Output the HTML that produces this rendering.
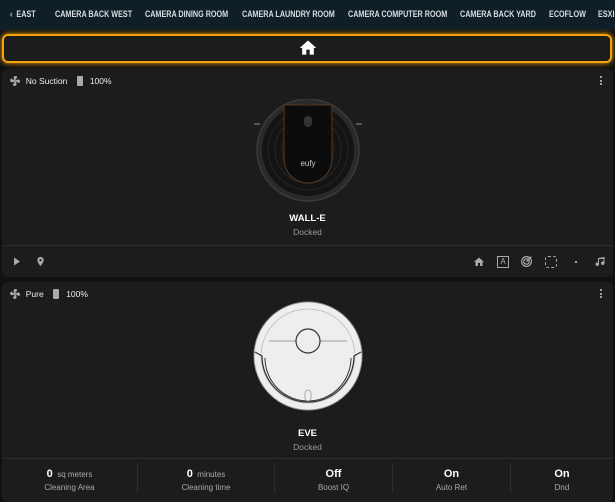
<!DOCTYPE html>
<html><head><style>
*{box-sizing:border-box;margin:0;padding:0}
body{width:615px;height:500px;background:#111;font-family:"Liberation Sans",sans-serif;overflow:hidden;position:relative;color:#e1e1e1}
.top{position:absolute;left:0;top:0;width:615px;height:30px;background:#101e28;}
.top span{position:absolute;top:9px;font-size:9.5px;font-weight:bold;color:#d8dde0;white-space:nowrap;transform:scaleX(0.76);transform-origin:left}
.home{position:absolute;left:2px;top:34px;width:610px;height:29px;background:#1c1c1c;border:2px solid #f5a30a;border-radius:6px;box-shadow:0 0 6px #f5a30a}
.card{position:absolute;left:2px;width:611px;background:#1c1c1c;border-radius:6px}
.hdr{position:absolute;left:7px;top:6px;font-size:8.5px;color:#eee;display:flex;align-items:center}
.name{position:absolute;width:100%;text-align:center;font-weight:bold;font-size:9.5px;color:#fff}
.st{position:absolute;width:100%;text-align:center;font-size:8.5px;color:#9a9a9a}
.dots{position:absolute;right:10px;width:3px}
.dots i{display:block;width:2px;height:2px;background:#ccc;margin-bottom:1.5px;border-radius:1px}
.stats{position:absolute;left:0;top:176px;width:100%;height:38px;border-top:1px solid #2e2e2e}
.stats div{position:absolute;top:4px;height:30px;text-align:center;border-left:1px solid #2e2e2e;padding-top:1px}
.stats div:first-child{border-left:none}
.stats b{font-size:11px;color:#fff}
.stats small{font-size:8px;color:#aaa}
.stats p{font-size:8px;color:#aaa;margin-top:1px}
</style></head><body>
<div class="top">
<span style="left:10px">&#8249;&nbsp; EAST</span>
<span style="left:55px">CAMERA BACK WEST</span>
<span style="left:145px">CAMERA DINING ROOM</span>
<span style="left:242px">CAMERA LAUNDRY ROOM</span>
<span style="left:348px">CAMERA COMPUTER ROOM</span>
<span style="left:460px">CAMERA BACK YARD</span>
<span style="left:549px">ECOFLOW</span>
<span style="left:598px">ESXI</span>
</div>
<div class="home"><svg style="position:absolute;left:294px;top:2px" width="20" height="20" viewBox="0 0 24 24"><path d="M10 20v-6h4v6h5v-8h3L12 3 2 12h3v8z" fill="#fff"/></svg></div>

<div class="card" style="top:69px;height:208px">
<div class="hdr"><svg width="12" height="12" viewBox="0 0 24 24"><path fill="#aaa" d="M12 11a1 1 0 100 2 1 1 0 000-2m.5-9c4.5 0 4.6 3.6 2.2 4.8-1 .5-1.4 1.4-1.6 2.3.5.2.9.5 1.2.9 3.7-2 7.7-1.2 7.7 2.3 0 4.5-3.6 4.6-4.8 2.2-.5-1-1.4-1.4-2.3-1.6-.2.5-.5.9-.9 1.2 2 3.7 1.2 7.7-2.3 7.7-4.5 0-4.6-3.6-2.2-4.8 1-.5 1.4-1.4 1.5-2.3-.5-.2-.9-.5-1.2-.9C6.3 15.4 2.3 14.6 2.3 11c0-4.5 3.6-4.6 4.8-2.2.5 1 1.4 1.4 2.3 1.5.2-.5.5-.9.9-1.2C8.3 5.4 9 2 12.5 2z"/></svg>&nbsp;&nbsp;No Suction&nbsp;&nbsp;&nbsp;&nbsp;<span style="display:inline-block;width:6px;height:10px;background:#aaa;border-radius:1px"></span>&nbsp;&nbsp;&nbsp;100%</div>
<div class="dots" style="top:7px"><i></i><i></i><i></i></div>
<svg style="position:absolute;left:248px;top:30px" width="116" height="104" viewBox="0 0 116 104">
<rect x="4" y="24" width="6" height="2" fill="#555"/><rect x="106" y="24" width="6" height="2" fill="#555"/>
<circle cx="58" cy="51" r="51" fill="#2a2a2a" stroke="#3a3a3a" stroke-width="1.5"/>
<circle cx="58" cy="51" r="46" fill="#141414"/>
<circle cx="58" cy="51" r="40" fill="none" stroke="#262626" stroke-width="1"/>
<circle cx="58" cy="51" r="33" fill="none" stroke="#262626" stroke-width="1"/>
<circle cx="58" cy="51" r="26" fill="none" stroke="#262626" stroke-width="1"/>
<path d="M34 6 L82 6 L82 60 A24 24 0 0 1 34 60 Z" fill="#0c0c0c" stroke="#5a3a22" stroke-width="1"/>
<rect x="54" y="17" width="8" height="11" rx="4" fill="#333"/>
<text x="58" y="67" text-anchor="middle" font-size="8" fill="#ccc" font-family="Liberation Sans">eufy</text>
</svg>
<div class="name" style="top:144px">WALL-E</div>
<div class="st" style="top:158px">Docked</div>
<div style="position:absolute;left:0;top:176px;width:100%;border-top:1px solid #2e2e2e"></div>
<svg style="position:absolute;left:11px;top:188px" width="8" height="9" viewBox="0 0 8 9"><path d="M1 0.5 L7 4.5 L1 8.5Z" fill="#aaa"/></svg>
<svg style="position:absolute;left:33px;top:186px" width="11" height="13" viewBox="0 0 24 24"><path fill="#aaa" d="M12 2a7 7 0 00-7 7c0 5 7 13 7 13s7-8 7-13a7 7 0 00-7-7m0 9.5A2.5 2.5 0 1112 6.5a2.5 2.5 0 010 5z"/></svg>
<svg style="position:absolute;left:471px;top:187px" width="12" height="12" viewBox="0 0 24 24"><path d="M10 20v-6h4v6h5v-8h3L12 3 2 12h3v8z" fill="#aaa"/></svg>
<div style="position:absolute;left:495px;top:187px;width:12px;height:12px;border:1.5px solid #aaa;font-size:8px;color:#aaa;text-align:center;line-height:9px">A</div>
<svg style="position:absolute;left:518px;top:186px" width="13" height="13" viewBox="0 0 24 24"><g fill="none" stroke="#aaa" stroke-width="2.2"><circle cx="12" cy="12" r="9"/><circle cx="12" cy="12" r="5"/></g><path d="M12 12 L21 3" stroke="#aaa" stroke-width="2.5"/></svg>
<div style="position:absolute;left:543px;top:187px;width:12px;height:12px;border:1.5px dashed #aaa;border-radius:3px"></div>
<div style="position:absolute;left:573px;top:192px;width:2px;height:2px;background:#aaa"></div>
<svg style="position:absolute;left:592px;top:186px" width="12" height="13" viewBox="0 0 24 24"><path fill="#aaa" d="M21 3v12.5a3.5 3.5 0 11-2-3.15V7H10v10.5a3.5 3.5 0 11-2-3.15V5z"/></svg>
</div>

<div class="card" style="top:282px;height:220px">
<div class="hdr"><svg width="12" height="12" viewBox="0 0 24 24"><path fill="#aaa" d="M12 11a1 1 0 100 2 1 1 0 000-2m.5-9c4.5 0 4.6 3.6 2.2 4.8-1 .5-1.4 1.4-1.6 2.3.5.2.9.5 1.2.9 3.7-2 7.7-1.2 7.7 2.3 0 4.5-3.6 4.6-4.8 2.2-.5-1-1.4-1.4-2.3-1.6-.2.5-.5.9-.9 1.2 2 3.7 1.2 7.7-2.3 7.7-4.5 0-4.6-3.6-2.2-4.8 1-.5 1.4-1.4 1.5-2.3-.5-.2-.9-.5-1.2-.9C6.3 15.4 2.3 14.6 2.3 11c0-4.5 3.6-4.6 4.8-2.2.5 1 1.4 1.4 2.3 1.5.2-.5.5-.9.9-1.2C8.3 5.4 9 2 12.5 2z"/></svg>&nbsp;&nbsp;Pure&nbsp;&nbsp;&nbsp;&nbsp;<span style="display:inline-block;width:6px;height:10px;background:#aaa;border-radius:1px"></span>&nbsp;&nbsp;&nbsp;100%</div>
<div class="dots" style="top:7px"><i></i><i></i><i></i></div>
<svg style="position:absolute;left:250px;top:18px" width="112" height="112" viewBox="0 0 112 112">
<circle cx="56" cy="56" r="54" fill="#eee" stroke="#999" stroke-width="1"/>
<circle cx="56" cy="56" r="47" fill="none" stroke="#bbb" stroke-width="0.8"/>
<path d="M17 41 H95" stroke="#aaa" stroke-width="1.2"/>
<circle cx="56" cy="41" r="12" fill="#eee" stroke="#333" stroke-width="1.2"/>
<path d="M3 52 L10 56 A46 46 0 0 0 102 56 L109 52" fill="none" stroke="#333" stroke-width="1.2"/>
<path d="M13 58 A43 43 0 0 0 99 58" fill="none" stroke="#333" stroke-width="1"/>
<rect x="53" y="90" width="6" height="11" rx="3" fill="none" stroke="#999" stroke-width="0.8"/>
</svg>
<div class="name" style="top:146px">EVE</div>
<div class="st" style="top:160px">Docked</div>
<div class="stats">
<div style="left:0;width:135px"><b>0</b> <small>sq meters</small><p>Cleaning Area</p></div>
<div style="left:135px;width:137px"><b>0</b> <small>minutes</small><p>Cleaning time</p></div>
<div style="left:272px;width:118px"><b>Off</b><p>Boost IQ</p></div>
<div style="left:390px;width:118px"><b>On</b><p>Auto Ret</p></div>
<div style="left:508px;width:103px"><b>On</b><p>Dnd</p></div>
</div>
</div>
</body></html>
